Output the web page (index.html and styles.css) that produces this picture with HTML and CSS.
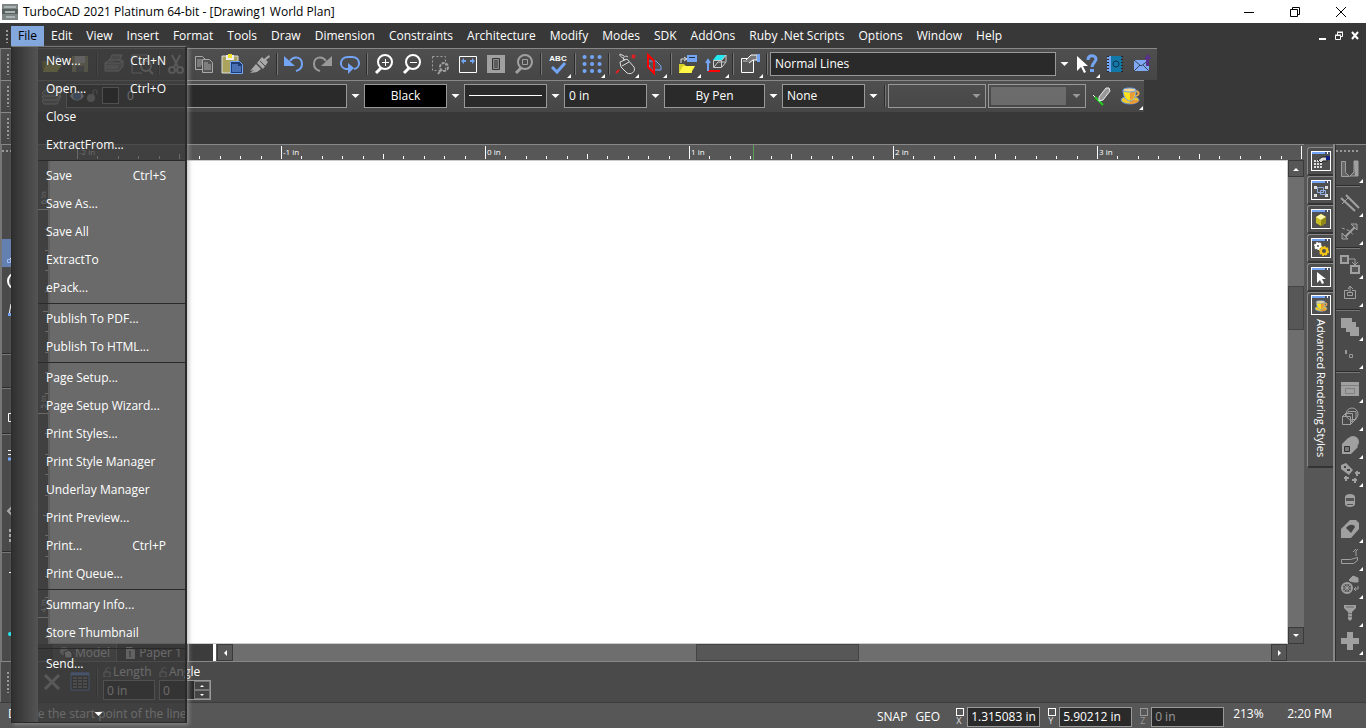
FILE: index.html
```html
<!DOCTYPE html>
<html lang="en">
<head>
    <meta charset="UTF-8">
    <meta name="viewport" content="width=device-width, initial-scale=1.0">
    <title>TurboCAD 2021 Platinum 64-bit - [Drawing1 World Plan]</title>
    <link rel="stylesheet" href="styles.css">
</head>
<body>
    <svg class="defs" width="0" height="0" aria-hidden="true">
        <symbol id="caret" viewBox="0 0 8 4"><path d="M0 0h8L4 4z" fill="currentColor"/></symbol>
        <symbol id="inch" viewBox="0 0 204 14">
            <path d="M.5 1v13M20.5 11v3M41.5 11v3M61.5 11v3M82.5 11v3M102.5 9v5M122.5 11v3M143.5 11v3M163.5 11v3M184.5 11v3" stroke="#fff"/>
        </symbol>
        <symbol id="inch-v" viewBox="0 0 10 204">
            <path d="M0 .5h10M7 20.5h3M7 41.5h3M7 61.5h3M7 82.5h3M5 102.5h5M7 122.5h3M7 143.5h3M7 163.5h3M7 184.5h3" stroke="#fff"/>
        </symbol>
        <symbol id="window" viewBox="0 0 20 20">
            <path d="M0 0h20v20H0z" fill="#fff"/><path d="M1 3h18v16H1z" fill="#505050"/>
            <path d="M1 1h13v2H1z" fill="#74a4f4"/><path d="M14 1h2v2h-2zM17 1h2v2h-2z" fill="#46536e"/>
        </symbol>
        <symbol id="cup" viewBox="0 0 24 24">
            <ellipse cx="12" cy="16" rx="9" ry="4" fill="#f2cb2c" stroke="#5c8fe0"/>
            <path d="M12 20c5 0 9-2 9-4h-9z" fill="#e89b34"/>
            <path d="M17 7c5 0 5 5-1 5" fill="none" stroke="#e8a94a" stroke-width="2"/>
            <path d="M5 6h13c0 6-2 11-6 11S5 12 5 6z" fill="#ffe21c" stroke="#6d9be8"/>
            <path d="M12 6h5c0 6-2 10-5 10z" fill="#e89b34"/>
            <ellipse cx="11.500" cy="6" rx="6.500" ry="2" fill="#f5d98c" stroke="#6d9be8"/>
        </symbol>
    </svg>

    <header class="titlebar">
        <svg class="app-icon" viewBox="0 0 16 16"><path d="M0 0h16v16H0z" fill="#7d8585"/><path d="M0 5h16v5H0z" fill="#596060"/><path d="M2 3h12M3 8h10M4 13h9" stroke="#aab2b2" stroke-width="2"/></svg>
        <h1>TurboCAD 2021 Platinum 64-bit - [Drawing1 World Plan]</h1>
        <div class="window-controls">
            <button aria-label="Minimize"><svg viewBox="0 0 10 10"><path d="M0 5.500h10" stroke="#000"/></svg></button>
            <button aria-label="Restore"><svg viewBox="0 0 10 10"><path d="M.5 2.500h7v7h-7zM2.500 2V.5h7v7H8" fill="none" stroke="#000"/></svg></button>
            <button aria-label="Close"><svg viewBox="0 0 10 10"><path d="M0 0l10 10M10 0L0 10" stroke="#000"/></svg></button>
        </div>
    </header>

    <nav class="menubar">
        <span class="grip"></span>
        <button class="open">File</button>
        <button>Edit</button>
        <button>View</button>
        <button>Insert</button>
        <button>Format</button>
        <button>Tools</button>
        <button>Draw</button>
        <button>Dimension</button>
        <button>Constraints</button>
        <button>Architecture</button>
        <button>Modify</button>
        <button>Modes</button>
        <button>SDK</button>
        <button>AddOns</button>
        <button>Ruby .Net Scripts</button>
        <button>Options</button>
        <button>Window</button>
        <button>Help</button>
        <div class="doc-controls">
            <a href="#" aria-label="Minimize drawing"><svg viewBox="0 0 10 10"><path d="M1 8h7" stroke="#fff" stroke-width="2"/></svg></a>
            <a href="#" aria-label="Restore drawing"><svg viewBox="0 0 10 10"><path d="M1.500 4.500h5v4h-5zM3.500 4V1.500h5v4H7M1 4h6M3 1h6" fill="none" stroke="#fff"/></svg></a>
            <a href="#" aria-label="Close drawing"><svg viewBox="0 0 10 10"><path d="M2 1l6 7M8 1L2 8" stroke="#fff" stroke-width="2"/></svg></a>
        </div>
    </nav>

    <div class="toolbar">
        <span class="grip"></span>
        <button class="tool" aria-label="Open"><svg viewBox="0 0 24 24"><path d="M2 9h7l2 2h7v9H3z" fill="#928e2c"/><path d="M6 13h16l-5 7H3z" fill="#c8c458"/><path d="M12 5h4l2-2 3 4-4 2V7h-5z" fill="#74a4f4"/></svg></button>
        <button class="tool" aria-label="Save"><svg viewBox="0 0 24 24"><path d="M4 4h16v16H4z" fill="#a8a67c"/><path d="M7 4h10v7H7z" fill="#ddd"/><path d="M8 14h8v6H8z" fill="#666"/></svg></button>
        <span class="sep"></span>
        <button class="tool" aria-label="Print"><svg viewBox="0 0 24 24" fill="none" stroke="#bbb"><path d="M7 9l3-6h10l-3 6M3 11l4-3h13l-2 3zM3 11v8h14l4-5V8" fill="#777"/><path d="M4 14h12M4 16h12"/></svg></button>
        <button class="tool" aria-label="Print preview"><svg viewBox="0 0 24 24" fill="none" stroke="#bbb"><path d="M12 21H2V3h16v5M5 3v4M18 3v4"/><circle cx="16" cy="14" r="5" stroke-width="2"/><path d="M19 18l4 4" stroke-width="2"/></svg></button>
        <span class="sep"></span>
        <button class="tool" aria-label="Cut"><svg viewBox="0 0 24 24" fill="none" stroke="#bbb" stroke-width="2"><path d="M8 3l6 12M16 3l-6 12"/><circle cx="8" cy="18" r="3"/><circle cx="16" cy="18" r="3"/></svg></button>
        <button class="tool" aria-label="Copy"><svg viewBox="0 0 24 24" fill="none" stroke="#a9a9a9"><path d="M3.500 4.500h7l3 3v10h-10z"/><path d="M5 8h5M5 10h5M5 12h5M5 14h4"/><path d="M10.500 7.500h7l3 3v10h-10z" fill="#555"/><path d="M12 11h4M12 13h7M12 15h7M12 17h7"/></svg></button>
        <button class="tool" aria-label="Paste"><svg viewBox="0 0 24 24"><path d="M2 4h16v17H2z" fill="#aaa35e" stroke="#ddd"/><path d="M6 3h8v5H6z" fill="#eee"/><path d="M8 2h4v4H8z" fill="#f3e32a"/><path d="M10.500 9.500h9l3 3v9h-12z" fill="#1f3e73" stroke="#74a4f4"/><path d="M12 13h6M12 15h9M12 17h9M12 19h9" stroke="#74a4f4"/></svg></button>
        <button class="tool" aria-label="Format painter"><svg viewBox="0 0 24 24"><path d="M21 3l-5 4-2-2-5 6 6 6 5-7-2-2 4-3zM8 12l5 5-4 3-7 1 4-3-4 1z" fill="#a9a9a9"/><path d="M12 9l5 5" stroke="#4a4a4a"/></svg></button>
        <span class="sep"></span>
        <button class="tool" aria-label="Undo"><svg viewBox="0 0 24 24"><path d="M2 4v10h11z" fill="#74a4f4"/><path d="M8 9c4-6 12-4 12 3 0 4-2 6-6 7" fill="none" stroke="#74a4f4" stroke-width="2"/></svg></button>
        <button class="tool" aria-label="Redo"><svg viewBox="0 0 24 24"><path d="M22 4v10H11z" fill="#999"/><path d="M16 9c-4-6-12-4-12 3 0 4 2 6 6 7" fill="none" stroke="#999" stroke-width="2"/></svg></button>
        <button class="tool" aria-label="Repeat"><svg viewBox="0 0 24 24"><path d="M10 17H8C1 16 1 5 10 5h4c9 0 9 11 2 12" fill="none" stroke="#74a4f4" stroke-width="2"/><path d="M10 11v11l6-6z" fill="#74a4f4"/></svg></button>
        <span class="sep"></span>
        <button class="tool" aria-label="Zoom in"><svg viewBox="0 0 24 24" fill="none" stroke="#fff"><circle cx="13" cy="10" r="7" stroke-width="2"/><path d="M9 16l-5 5" stroke-width="3"/><path d="M10 10.500h7M13.500 7v7"/></svg></button>
        <button class="tool" aria-label="Zoom out"><svg viewBox="0 0 24 24" fill="none" stroke="#fff"><circle cx="13" cy="10" r="7" stroke-width="2"/><path d="M9 16l-5 5" stroke-width="3"/><path d="M10 10.500h7"/></svg></button>
        <button class="tool" aria-label="Zoom window"><svg viewBox="0 0 24 24" fill="none" stroke="#a0a0a0"><path d="M4.500 4.500h13v14h-13z" stroke-dasharray="2 2"/><circle cx="16" cy="15" r="4" stroke-width="2" stroke-dasharray="3 1"/><path d="M13 18l-3 4" stroke-width="2"/></svg></button>
        <button class="tool" aria-label="Zoom extents"><svg viewBox="0 0 24 24"><path d="M3.500 4.500h17v16h-17z" fill="none" stroke="#fff"/><path d="M5 9l3-3v2h2v2H8v2zM19 9l-3-3v2h-2v2h2v2z" fill="#74a4f4"/></svg></button>
        <button class="tool" aria-label="Zoom page"><svg viewBox="0 0 24 24"><path d="M3 3h18v18H3z" fill="#a0a0a0"/><path d="M8.500 6.500h7v11h-7z" fill="#888" stroke="#333"/><path d="M10 9h4M10 11h4M10 13h4M10 15h4" stroke="#333"/></svg></button>
        <button class="tool" aria-label="Zoom selection"><svg viewBox="0 0 24 24" fill="none" stroke="#a0a0a0"><circle cx="13" cy="10" r="7" stroke-width="2"/><path d="M9 16l-5 5" stroke-width="3"/><path d="M10.500 7.500h5v5h-5z"/></svg></button>
        <span class="sep"></span>
        <button class="tool more" aria-label="Spelling"><svg viewBox="0 0 24 24"><text x="12" y="9" text-anchor="middle" font-family="Liberation Sans, sans-serif" font-size="8" font-weight="bold" fill="#fff">ABC</text><path d="M6 15l5 5 8-9" fill="none" stroke="#74a4f4" stroke-width="3"/></svg></button>
        <span class="sep"></span>
        <button class="tool more" aria-label="Grid"><svg viewBox="0 0 24 24"><path d="M4.500 5h.1M12 5h.1M19.500 5h.1M4.500 12h.1M12 12h.1M19.500 12h.1M4.500 19h.1M12 19h.1M19.500 19h.1" stroke="#74a4f4" stroke-width="4" stroke-linecap="round"/></svg></button>
        <span class="sep"></span>
        <button class="tool more" aria-label="Snap"><svg viewBox="0 0 24 24"><path d="M6 10l7-3 7 8c2 5-3 8-7 6l-6-6zM8 14l7-4M11 8C8 5 5 4 6 2l4 2M10 8c-2-3 2-5 4-3" fill="none" stroke="#ddd"/><path d="M18 3l3 3M21 3l-3 3M2 21l3-3" stroke="#e02020" stroke-width="2"/></svg></button>
        <button class="tool more" aria-label="Workplane"><svg viewBox="0 0 24 24"><path d="M5 9h9l5 5v4H9z" fill="#555" stroke="#74a4f4"/><path d="M6 3l6 6v12l-6-6z" fill="none" stroke="#f00" stroke-width="2"/></svg></button>
        <span class="sep"></span>
        <button class="tool more" aria-label="Open view"><svg viewBox="0 0 24 24"><path d="M11 3h10v7H11z" fill="#74a4f4"/><path d="M13 5h6v1h-6z" fill="#234"/><path d="M3 12h5l2 2h6v7H3z" fill="#d4cf28"/><path d="M7 14h12l-4 7H3z" fill="#fff645"/><path d="M5 11V7h5M8 5l3 2-3 2" fill="none" stroke="#ddd"/></svg></button>
        <button class="tool more" aria-label="View cube"><svg viewBox="0 0 24 24"><path d="M9 8l4-5h9l-4 5z" fill="#23eaf0"/><path d="M9.500 8.500h8v7h-8zM18 8l4-5v7l-4 5M10 15l4-5h7" fill="none" stroke="#ccc"/><path d="M4 19h12" fill="none" stroke="#f00" stroke-width="2"/><path d="M4 9v10M2 11l2-3 2 3" fill="none" stroke="#74a4f4" stroke-width="2"/></svg></button>
        <span class="sep"></span>
        <button class="tool more" aria-label="Properties"><svg viewBox="0 0 24 24"><path d="M3.500 6.500h12v14h-12z" fill="#555" stroke="#fff"/><path d="M5 9h8" stroke="#ccc"/><path d="M8 8l5-5h6v5h-4l-4 3" fill="#777" stroke="#fff"/><path d="M19 2h3v8h-3z" fill="#74a4f4"/></svg></button>
        <span class="sep"></span>
        <label class="combo grow"><select aria-label="Style"><option>Normal Lines</option></select><svg class="caret"><use href="#caret"/></svg></label>
        <button class="tool more" aria-label="Context help"><svg viewBox="0 0 24 24"><path d="M2 4v15l4-4 3 6 2-1-3-6h5z" fill="#fff"/><path d="M13 8c0-6 8-5 8-1 0 3-4 4-4 8" fill="none" stroke="#74a4f4" stroke-width="3"/><path d="M15 17h4v3h-4z" fill="#74a4f4"/></svg></button>
        <button class="tool" aria-label="Address book"><svg viewBox="0 0 24 24"><path d="M4 4h4v16H4z" fill="#74a4f4"/><path d="M8 4h11v16H8z" fill="#1278a8"/><path d="M5 4v16M19 4v16" stroke="#222" stroke-width="2" stroke-dasharray="1 2"/><circle cx="13" cy="12" r="3" fill="none" stroke="#0b3350"/></svg></button>
        <button class="tool" aria-label="Mail"><svg viewBox="0 0 24 24"><path d="M3 8h15v11H3z" fill="#80aaf5"/><path d="M3 8l7 6 8-6M3 19l6-6M18 19l-6-6" fill="none" stroke="#345"/><path d="M15 14V7h-2l4-5 3 5h-2v7z" fill="#59308c"/></svg></button>
    </div>

    <div class="toolbar">
        <span class="grip"></span>
        <button class="tool" aria-label="Layers"><svg viewBox="0 0 24 24" fill="#666" stroke="#bbb"><path d="M2 17l5-5h14l-4 8H4z"/><path d="M2 13l5-4h14l-4 7H4z"/><path d="M2 9l5-4h14l-4 7H4z"/></svg></button>
        <div class="layer-box">
            <svg class="layer-icon" viewBox="0 0 16 16"><path d="M1 8c4-6 10-6 14 0-4 6-10 6-14 0z" fill="#ddd"/><circle cx="8" cy="8" r="4" fill="#4d79bd"/></svg>
            <svg class="layer-icon" viewBox="0 0 16 16"><circle cx="6" cy="10" r="4" fill="#999"/><path d="M8 8V4c0-3 4-3 4 0v2" fill="none" stroke="#999"/></svg>
            <span class="swatch"></span>
            <select aria-label="Layer"><option>0</option></select>
        </div>
        <svg class="caret"><use href="#caret"/></svg>
        <label class="combo"><select class="black" aria-label="Color"><option>Black</option></select><svg class="caret"><use href="#caret"/></svg></label>
        <div class="combo"><button class="line-box" aria-label="Line style"><span></span></button><svg class="caret"><use href="#caret"/></svg></div>
        <label class="combo"><select aria-label="Line width"><option>0 in</option></select><svg class="caret"><use href="#caret"/></svg></label>
        <label class="combo wide"><select class="center" aria-label="Pen"><option>By Pen</option></select><svg class="caret"><use href="#caret"/></svg></label>
        <label class="combo"><select aria-label="Brush"><option>None</option></select><svg class="caret"><use href="#caret"/></svg></label>
        <span class="sep"></span>
        <label class="combo off"><select aria-label="Brush pattern" disabled><option></option></select><svg class="caret"><use href="#caret"/></svg></label>
        <label class="combo off"><select class="filled" aria-label="Brush color" disabled><option></option></select><svg class="caret"><use href="#caret"/></svg></label>
        <button class="tool" aria-label="Pick style"><svg viewBox="0 0 24 24"><path d="M3 11l5 5" stroke="#fff"/><path d="M5 13l8 8" stroke="#20d020" stroke-width="2"/><path d="M9 13l7-9h3l1 3-7 9-4 1z" fill="#999" stroke="#eee"/></svg></button>
        <button class="tool more" aria-label="Render material"><svg><use href="#cup"/></svg></button>
    </div>

    <div class="toolbar empty"><span class="grip"></span></div>

    <main class="workspace">
        <aside class="rail rail-left">
            <span class="grip-h"></span>
            <button class="tool" aria-label="Select"></button>
            <button class="tool" aria-label="Point"></button>
            <button class="tool" aria-label="Construction"></button>
            <button class="tool active" aria-label="Line"><svg viewBox="0 0 24 24"><path d="M6 18L20 4" stroke="#fff"/><path d="M3.500 18.500h3v3h-3z" fill="none" stroke="#9cc0ff"/></svg></button>
            <button class="tool" aria-label="Circle"><svg viewBox="0 0 24 24"><circle cx="12" cy="12" r="8" fill="none" stroke="#fff" stroke-width="2"/></svg></button>
            <button class="tool" aria-label="Arc"><svg viewBox="0 0 24 24"><path d="M5 18L7 7l10 9" fill="none" stroke="#fff"/><path d="M4 16h3v3H4z" fill="#74a4f4"/></svg></button>
            <button class="tool" aria-label="Curve"></button>
            <span class="sep-h"></span>
            <button class="tool" aria-label="Dimension"></button>
            <span class="sep-h double"></span>
            <button class="tool" aria-label="Box"><svg viewBox="0 0 24 24"><path d="M4.500 8.500h14v8h-14z" fill="none" stroke="#fff"/></svg></button>
            <span class="sep-h"></span>
            <button class="tool" aria-label="Text"><svg viewBox="0 0 24 24"><path d="M4 11.500h14M4 15.500h14" stroke="#fff"/><path d="M4 20h14" stroke="#74a4f4" stroke-width="3"/></svg></button>
            <button class="tool" aria-label="Hatch"></button>
            <button class="tool" aria-label="Wall"><svg viewBox="0 0 24 24"><path d="M4 16l5-5 5 5-5 5z" fill="none" stroke="#aaa" stroke-width="2"/></svg></button>
            <button class="tool" aria-label="Array"><svg viewBox="0 0 24 24"><path d="M6 6v14" stroke="#aaa" stroke-width="2" stroke-dasharray="3 2"/></svg></button>
            <span class="sep-h"></span>
            <button class="tool" aria-label="Slab"><svg viewBox="0 0 24 24"><path d="M5 15.500h13" stroke="#fff"/></svg></button>
            <button class="tool" aria-label="Light"></button>
            <button class="tool" aria-label="Camera"><svg viewBox="0 0 24 24"><circle cx="6" cy="21" r="2" fill="#23eaf0"/></svg></button>
        </aside>

        <section class="drawing">
            <div class="ruler-top">
                <div class="inch"><svg><use href="#inch"/></svg>-2 in</div>
                <div class="inch"><svg><use href="#inch"/></svg>-1 in</div>
                <div class="inch"><svg><use href="#inch"/></svg>0 in</div>
                <div class="inch"><svg><use href="#inch"/></svg>1 in<span class="cursor-mark"></span></div>
                <div class="inch"><svg><use href="#inch"/></svg>2 in</div>
                <div class="inch"><svg><use href="#inch"/></svg>3 in</div>
                <div class="inch"><svg><use href="#inch"/></svg></div>
            </div>
            <div class="canvas-row">
                <div class="ruler-left">
                    <div class="inch-v"><svg><use href="#inch-v"/></svg><span>6 in</span></div>
                    <div class="inch-v"><svg><use href="#inch-v"/></svg><span>5 in</span></div>
                    <div class="inch-v"><svg><use href="#inch-v"/></svg><span>4 in</span></div>
                </div>
                <div class="canvas"></div>
                <div class="scroll-v">
                    <button aria-label="Scroll up"><svg viewBox="0 0 8 8"><path d="M1 6h6L4 3z" fill="#fff"/></svg></button>
                    <span class="thumb"></span>
                    <button aria-label="Scroll down"><svg viewBox="0 0 8 8"><path d="M1 2h6L4 5z" fill="#fff"/></svg></button>
                </div>
            </div>
            <div class="page-row">
                <div class="page-tabs">
                    <button class="current"><svg viewBox="0 0 14 12"><circle cx="5" cy="4" r="4" fill="#bbb"/><path d="M5 5l5-2 3 3v5H6z" fill="#ddd" stroke="#333"/></svg>Model</button>
                    <button><svg viewBox="0 0 14 12"><path d="M3 0h6l3 3v9H3z" fill="#ddd"/><path d="M7 4v6M6 5h1" stroke="#333"/></svg>Paper 1</button>
                </div>
                <button class="scroll-button" aria-label="Scroll left"><svg viewBox="0 0 8 8"><path d="M6 1v6L3 4z" fill="#fff"/></svg></button>
                <div class="scroll-h"><span class="thumb"></span></div>
                <button class="scroll-button" aria-label="Scroll right"><svg viewBox="0 0 8 8"><path d="M3 1v6l3-3z" fill="#fff"/></svg></button>
                <span class="corner"></span>
            </div>
        </section>

        <aside class="palettes">
            <button aria-label="Selection info"><svg viewBox="0 0 20 20"><use href="#window"/><path d="M3 9h8v8H3z" fill="#ddd"/><path d="M3 11.500h8M3 14.500h8M5.500 9v8M8.500 9v8" stroke="#555"/><path d="M7 9l4-3h5v4h-4l-2 2z" fill="#ddd" stroke="#222"/><path d="M15 5h4v4h-4z" fill="#102080"/></svg></button>
            <button aria-label="Blocks"><svg viewBox="0 0 20 20"><use href="#window"/><path d="M3 6h3v3H3zM14 6h3v3h-3zM3 14h3v3H3zM14 14h3v3h-3z" fill="#ddd"/><path d="M6.500 7.500h6v5h-6zM9.500 10.500h5v4h-5z" fill="none" stroke="#8faee0"/></svg></button>
            <button aria-label="Library"><svg viewBox="0 0 20 20"><use href="#window"/><path d="M10 5l5 3v6l-5 3-5-3V8z" fill="#c8be22"/><path d="M10 5l5 3-5 3-5-3z" fill="#fff8a8"/><path d="M10 11l5-3v6l-5 3z" fill="#8f8716"/></svg></button>
            <button aria-label="Design director"><svg viewBox="0 0 20 20" fill="none"><use href="#window"/><circle cx="7" cy="8" r="2" stroke="#fff" stroke-width="2"/><circle cx="7" cy="8" r="3" stroke="#fff" stroke-width="2" stroke-dasharray="2 1"/><circle cx="13" cy="13" r="3" stroke="#f5c518" stroke-width="2"/><circle cx="13" cy="13" r="4" stroke="#f5c518" stroke-width="2" stroke-dasharray="2 1"/></svg></button>
            <button aria-label="Selector"><svg viewBox="0 0 20 20"><use href="#window"/><path d="M6 5v11l3-3 2 4 2-1-2-4h4z" fill="#fff"/></svg></button>
            <button class="current"><svg viewBox="0 0 20 20"><use href="#window"/><use href="#cup" x="2" y="3" width="16" height="16"/></svg><span>Advanced Rendering Styles</span></button>
        </aside>

        <aside class="rail rail-right">
            <span class="grip-h"></span>
            <button class="tool more" aria-label="Magnet"><svg viewBox="0 0 24 24"><path d="M3.500 4.500h4v11l4 4h-8zM16 4h4v15h-8l4-4z" fill="#666" stroke="#a0a0a0"/><path d="M16 4h4v15h-3z" fill="#a0a0a0"/></svg></button>
            <span class="sep-h"></span>
            <button class="tool more" aria-label="Trim"><svg viewBox="0 0 24 24"><path d="M3 7l14 13M8 4l13 13" stroke="#a0a0a0" stroke-width="2"/><path d="M4 13l7-7" stroke="#a0a0a0"/></svg></button>
            <button class="tool more" aria-label="Stretch"><svg viewBox="0 0 24 24"><path d="M7 18L17 8" stroke="#a0a0a0" stroke-width="2"/><path d="M4 20v-6l6 6zM19 5v6l-6-6z" fill="#5a5a5a" stroke="#a0a0a0"/><path d="M4 9l8 3 4 5" fill="none" stroke="#a0a0a0" stroke-dasharray="3 2"/></svg></button>
            <span class="sep-h"></span>
            <button class="tool more" aria-label="Copy linear"><svg viewBox="0 0 24 24"><path d="M3 3h7v7H3zM13 13h8v7h-8z" fill="#555" stroke="#a0a0a0" stroke-width="2"/><path d="M11 6h6v5M14 9l3 3 3-3" fill="none" stroke="#a0a0a0"/></svg></button>
            <button class="tool more" aria-label="Lift"><svg viewBox="0 0 24 24"><path d="M6.500 9.500h4M14 9.500h3.500v8h-11v-8" fill="none" stroke="#a0a0a0"/><path d="M9.500 14.500v-3h5v3zM12 12V6M10 8l2-3 3 3" fill="none" stroke="#a0a0a0"/></svg></button>
            <span class="sep-h"></span>
            <button class="tool more" aria-label="Union"><svg viewBox="0 0 24 24"><path d="M3 3h11v4h4v5h3v9h-9v-4H8v-4H3z" fill="#a0a0a0"/></svg></button>
            <button class="tool more" aria-label="Nodes"><svg viewBox="0 0 24 24"><path d="M7 7h2v4H7z" fill="#999"/><path d="M11.500 11.500h3v3h-3z" fill="none" stroke="#999"/></svg></button>
            <span class="sep-h"></span>
            <button class="tool more" aria-label="Sheet"><svg viewBox="0 0 24 24"><path d="M3 5h18v14H3z" fill="#a0a0a0"/><path d="M3 8.500h18M7.500 11.500h9v5h-9z" stroke="#808080" fill="none"/></svg></button>
            <button class="tool more" aria-label="Contour"><svg viewBox="0 0 24 24" fill="none" stroke="#a0a0a0"><circle cx="14" cy="9" r="6" /><path d="M4.500 11.500h8v8h-8zM7.500 11V8.500h7v8H13M10 8V6.500h8v8h-3M4 12l4-4M12 20l5-5" /></svg></button>
            <button class="tool more" aria-label="Cylinder"><svg viewBox="0 0 24 24"><circle cx="15" cy="9" r="6" fill="#a0a0a0"/><path d="M10 5l-6 6v10h9l7-7z" fill="#a0a0a0"/><path d="M6.500 13.500h5v5h-5z" fill="#777" stroke="#333"/></svg></button>
            <button class="tool more" aria-label="Materials"><svg viewBox="0 0 24 24"><path d="M3 4l5-2 7 7-4 5-8-6z" fill="#a0a0a0"/><path d="M6 5h2v2H6zM9 8h3v2H9z" fill="#444"/><path d="M8 15v5M6 17h5M19 10v5M17 12h5M17 17v5M14 19h5" stroke="#a0a0a0" stroke-width="2"/></svg></button>
            <button class="tool" aria-label="Face"><svg viewBox="0 0 24 24"><path d="M7 8c0-4 10-4 10 0v7c0 4-10 4-10 0z" fill="#a0a0a0"/><path d="M8 9h8v3H8zM9 15h6v1H9z" fill="#555"/></svg></button>
            <button class="tool more" aria-label="Chamfer"><svg viewBox="0 0 24 24"><path d="M3 12l9-9h6l3 3v6l-8 9H3z" fill="#a0a0a0"/><path d="M8 11c3-4 8-4 9-1l-4 6z" fill="#444"/></svg></button>
            <button class="tool more" aria-label="Bend"><svg viewBox="0 0 24 24"><path d="M3.500 14.500h9l7-2v3l-4 3h-12zM18 11V6l2-2M15 7l3-3" fill="none" stroke="#a0a0a0"/></svg></button>
            <button class="tool more" aria-label="Facets"><svg viewBox="0 0 24 24" fill="none" stroke="#a0a0a0"><circle cx="9" cy="15" r="5" stroke-width="2"/><path d="M4 15h10M9 10v10M6 12l6 6M12 12l-6 6"/><path d="M11 7l4-4 5 2v4h-4l-4-1z" fill="#a0a0a0"/><path d="M20 13v3h-4M18 14l-2 2 2 2"/></svg></button>
            <button class="tool more" aria-label="Fasteners"><svg viewBox="0 0 24 24"><path d="M6 4h12v3l-4 4v7l-2 2-2-2v-7L6 7z" fill="#a0a0a0"/><path d="M8 6h8M10 12l4 1M10 15l4 1" stroke="#666"/></svg></button>
            <button class="tool more" aria-label="Add"><svg viewBox="0 0 24 24"><path d="M9 3h6v6h6v6h-6v6H9v-6H3V9h6z" fill="#a0a0a0"/></svg></button>
        </aside>
    </main>

    <div class="inspector">
        <span class="grip"></span>
        <button class="tool" aria-label="Cancel"><svg viewBox="0 0 24 24"><path d="M5 5l14 14M19 5L5 19" stroke="#bbb" stroke-width="3"/></svg></button>
        <button class="tool" aria-label="Field table"><svg viewBox="0 0 24 24"><path d="M3 3h18v17H3z" fill="#333" stroke="#74a4f4"/><path d="M3 4h18" stroke="#74a4f4" stroke-width="3"/><path d="M5 8h4M10 8h4M15 8h4M5 11h4M10 11h4M15 11h4M5 14h4M10 14h4M15 14h4M5 17h4M10 17h4M15 17h4" stroke="#ddd"/></svg></button>
        <span class="sep"></span>
        <div class="field">
            <label for="length"><svg viewBox="0 0 9 10"><path d="M1 5h6v5H1zM3 5V2c0-2 4-2 4 0" fill="none" stroke="#bbb"/></svg>Length</label>
            <input id="length" type="text" value="0 in">
        </div>
        <div class="field">
            <label for="angle"><svg viewBox="0 0 9 10"><path d="M1 5h6v5H1zM3 5V2c0-2 4-2 4 0" fill="none" stroke="#bbb"/></svg>Angle</label>
            <div class="spin">
                <input id="angle" type="text" value="0">
                <div class="spin-buttons">
                    <button aria-label="Increase"><svg viewBox="0 0 4 4"><path d="M0 3h4L2 1z" fill="#fff"/></svg></button>
                    <button aria-label="Decrease"><svg viewBox="0 0 4 4"><path d="M0 1h4L2 3z" fill="#fff"/></svg></button>
                </div>
            </div>
        </div>
    </div>

    <footer class="statusbar">
        <p>Define the start point of the line</p>
        <button>SNAP</button>
        <button>GEO</button>
        <div class="coord"><label for="x"><i></i>X</label><input id="x" type="text" value="1.315083 in"></div>
        <div class="coord"><label for="y"><i></i>Y</label><input id="y" type="text" value="5.90212 in"></div>
        <div class="coord off"><label for="z"><i></i>Z</label><input id="z" type="text" value="0 in" disabled></div>
        <span class="zoom">213%</span>
        <time>2:20 PM</time>
    </footer>

    <div class="file-menu">
        <div class="items">
            <button>New... <kbd>Ctrl+N</kbd></button>
            <button>Open... <kbd>Ctrl+O</kbd></button>
            <button>Close</button>
            <button>ExtractFrom...</button>
            <hr>
            <button>Save <kbd>Ctrl+S</kbd></button>
            <button>Save As...</button>
            <button>Save All</button>
            <button>ExtractTo</button>
            <button>ePack...</button>
            <hr>
            <button>Publish To PDF...</button>
            <button>Publish To HTML...</button>
            <hr>
            <button>Page Setup...</button>
            <button>Page Setup Wizard...</button>
            <button>Print Styles...</button>
            <button>Print Style Manager</button>
            <button>Underlay Manager</button>
            <button>Print Preview...</button>
            <button>Print... <kbd>Ctrl+P</kbd></button>
            <button>Print Queue...</button>
            <hr>
            <button>Summary Info...</button>
            <button>Store Thumbnail</button>
            <hr>
            <button>Send...</button>
        </div>
        <button class="scroll-more" aria-label="More items"><svg class="caret"><use href="#caret"/></svg></button>
    </div>
</body>
</html>
```

FILE: styles.css
```css
* {
    box-sizing: border-box;
}

body {
    display: flex;
    flex-direction: column;
    height: 100vh;
    margin: 0;
    overflow: hidden;
    background: #383838;
    color: #fff;
    font-family: "Open Sans", "Noto Sans", sans-serif;
    font-size: 12px;
    line-height: 16px;
}

button, input, select {
    margin: 0;
    padding: 0;
    border: 0;
    border-radius: 0;
    background: none;
    color: inherit;
    font: inherit;
}

svg {
    display: block;
    flex: none;
}

.defs {
    position: absolute;
}

/* title bar */
.titlebar {
    display: flex;
    align-items: center;
    flex: none;
    height: 23px;
    padding-left: 2px;
    background: #fff;
    color: #000;
}

.titlebar h1 {
    margin: 0 0 0 5px;
    font-size: 12px;
    font-weight: normal;
}

.app-icon {
    width: 16px;
    height: 16px;
}

.window-controls {
    display: flex;
    margin-left: auto;
    padding-right: 2px;
}

.window-controls button {
    display: grid;
    place-items: center;
    width: 46px;
    height: 20px;
}

.window-controls svg, .doc-controls svg {
    width: 10px;
    height: 10px;
}

/* menu bar */
.menubar {
    display: flex;
    align-items: center;
    flex: none;
    height: 25px;
}

.menubar button {
    height: 20px;
    padding: 0 7px;
    white-space: nowrap;
}

.menubar button.open {
    background: #83a8de;
    color: #000;
}

.doc-controls {
    display: flex;
    gap: 6px;
    margin-left: auto;
    padding-right: 6px;
}

.grip {
    flex: none;
    width: 11px;
    height: 14px;
    background: radial-gradient(circle at 7px 2px, #999 1px, transparent 1px) 0 0 / 11px 4px repeat-y;
}

/* toolbars */
.toolbar {
    display: flex;
    align-items: center;
    align-self: flex-start;
    flex: none;
    height: 32px;
    padding-bottom: 2px;
    border-top: 1px solid #888;
    border-left: 1px solid #777;
    background: linear-gradient(#4f4f4f, #464646);
}

.toolbar .grip, .inspector .grip {
    width: 37px;
    height: 22px;
}

.toolbar.empty {
    width: 38px;
}

.tool {
    display: grid;
    place-items: center;
    position: relative;
    flex: none;
    width: 28px;
    height: 28px;
}

.tool svg {
    width: 24px;
    height: 24px;
}

/* small corner mark on buttons that open a flyout */
.more::after {
    content: "";
    position: absolute;
    right: 1px;
    bottom: 0;
    border: 2px solid transparent;
    border-right-color: #fff;
    border-bottom-color: #fff;
}

.sep {
    flex: none;
    width: 6px;
    height: 22px;
    background: linear-gradient(90deg, transparent 2px, #2c2c2c 2px, #2c2c2c 3px, #777 3px, #777 4px, transparent 4px);
}

.combo {
    display: flex;
    align-items: center;
}

.combo select, .line-box {
    appearance: none;
    width: 83px;
    height: 24px;
    padding: 0 4px;
    border: 1px solid #999;
    background: #2a2a2a;
}

.combo.grow select {
    width: 286px;
}

.combo.wide select {
    width: 101px;
}

.combo select.black {
    background: #000;
    text-align: center;
}

.combo select.center {
    text-align: center;
}

.caret {
    width: 17px;
    height: 4px;
    color: #fff;
}

.combo.off {
    width: 98px;
    margin-right: 2px;
    border: 1px solid #999;
    color: #999;
}

.combo.off select {
    width: 80px;
    height: 22px;
    border: 2px solid transparent;
    background: transparent;
}

.combo.off select.filled {
    background: #7a7a7a;
    background-clip: padding-box;
}

.combo.off .caret {
    color: #999;
}

.line-box span {
    display: block;
    height: 1px;
    background: #fff;
}

.layer-box {
    display: flex;
    align-items: center;
    width: 281px;
    height: 24px;
    padding-left: 2px;
    border: 1px solid #999;
    background: #2a2a2a;
}

.layer-box select {
    appearance: none;
    flex: 1;
    padding-left: 8px;
}

.layer-icon {
    width: 16px;
    height: 16px;
}

.swatch {
    width: 17px;
    height: 17px;
    margin-left: 1px;
    border: 1px solid #999;
    background: #000;
}

/* workspace */
.workspace {
    display: flex;
    flex: 1;
    min-height: 0;
}

.rail {
    display: flex;
    flex-direction: column;
    flex: none;
    overflow: hidden;
    border-top: 1px solid #888;
    background: #4a4a4a;
}

.rail-left {
    width: 38px;
    border-left: 2px solid #777;
}

.rail-right {
    width: 31px;
    border-left: 1px solid #2f2f2f;
}

.rail .active {
    background: #6480b0;
}

.grip-h {
    flex: none;
    width: 24px;
    height: 10px;
    background: radial-gradient(circle at 2px 6px, #999 1px, transparent 1px) 3px 0 / 4px 11px repeat-x;
}

.sep-h {
    flex: none;
    width: 24px;
    height: 6px;
    background: linear-gradient(transparent 2px, #2c2c2c 2px, #2c2c2c 3px, #777 3px, #777 4px, transparent 4px);
}

.sep-h.double {
    height: 18px;
}

.drawing {
    display: flex;
    flex-direction: column;
    flex: 1;
    min-width: 0;
    border-top: 1px solid #888;
    background: #575757;
}

.ruler-top {
    display: flex;
    flex: none;
    height: 15px;
    padding-left: 39px;
    overflow: hidden;
    font-size: 8px;
    line-height: 14px;
}

.inch {
    position: relative;
    flex: none;
    width: 204px;
    padding-left: 2px;
}

.inch svg {
    position: absolute;
    left: 0;
    top: 0;
    width: 204px;
    height: 14px;
}

.cursor-mark {
    position: absolute;
    left: 64px;
    top: 0;
    width: 1px;
    height: 15px;
    background: #58a058;
}

.canvas-row {
    display: flex;
    flex: 1;
    min-height: 0;
}

.ruler-left {
    flex: none;
    width: 10px;
    padding-top: 49px;
    overflow: hidden;
    font-size: 8px;
}

.inch-v {
    position: relative;
    height: 204px;
}

.inch-v svg {
    width: 10px;
    height: 204px;
}

.inch-v span {
    position: absolute;
    left: -3px;
    top: -18px;
    writing-mode: vertical-rl;
    transform: rotate(180deg);
}

.canvas {
    flex: 1;
    border: 1px solid #ccc;
    border-left-width: 2px;
    background: #fff;
}

.scroll-v {
    display: flex;
    flex-direction: column;
    width: 16px;
    background: #6e6e6e;
}

.scroll-v button, .scroll-button {
    display: grid;
    place-items: center;
    flex: none;
    width: 16px;
    height: 17px;
    border: 1px solid #3a3a3a;
    background: #575757;
}

.scroll-v svg, .scroll-button svg {
    width: 8px;
    height: 8px;
}

.thumb {
    border: 1px solid #444;
    background: #575757;
}

.scroll-v .thumb {
    height: 44px;
    margin: 109px 0 auto;
}

.page-row {
    display: flex;
    flex: none;
    height: 17px;
}

.page-tabs {
    display: flex;
    width: 178px;
    margin-right: 1px;
    padding-left: 15px;
    border-right: 3px solid #fff;
    background: #3c3c3c;
}

.page-tabs button {
    display: flex;
    align-items: center;
    gap: 2px;
    padding: 0 6px;
    border-right: 1px solid #888;
    white-space: nowrap;
}

.page-tabs .current {
    background: #575757;
}

.page-tabs svg {
    width: 14px;
    height: 12px;
}

.scroll-h {
    display: flex;
    flex: 1;
    background: #6e6e6e;
}

.scroll-h::before {
    content: "";
    flex: 46;
}

.scroll-h::after {
    content: "";
    flex: 41;
}

.scroll-h .thumb {
    flex: 16;
}

.corner {
    width: 17px;
}

/* docked palettes */
.palettes {
    display: flex;
    flex-direction: column;
    flex: none;
    width: 31px;
    padding: 3px 0 0 3px;
    border-right: 2px solid #888;
    background: #575757;
}

.palettes button {
    display: flex;
    justify-content: center;
    align-items: center;
    flex: none;
    height: 29px;
    border: 1px solid #888;
    border-right: 0;
    border-bottom: 2px solid #333;
    border-radius: 3px 0 0 3px;
    background: #4f4f4f;
}

.palettes .current {
    flex-direction: column;
    justify-content: flex-start;
    gap: 4px;
    height: 176px;
    padding-top: 2px;
}

.palettes svg {
    width: 20px;
    height: 20px;
}

.palettes span {
    font-size: 11px;
    writing-mode: vertical-rl;
    white-space: nowrap;
}

/* inspector bar */
.inspector {
    display: flex;
    align-items: center;
    flex: none;
    height: 41px;
    border-top: 1px solid #888;
    border-left: 1px solid #777;
    background: #4a4a4a;
}

.inspector .sep {
    height: 28px;
    margin-right: 3px;
}

.field {
    width: 52px;
    margin-right: 4px;
}

.field label {
    display: flex;
    align-items: center;
    gap: 1px;
    height: 16px;
    white-space: nowrap;
}

.field svg {
    width: 9px;
    height: 10px;
}

.field input {
    display: block;
    width: 100%;
    height: 20px;
    padding: 0 3px;
    border: 1px solid #999;
    background: #2a2a2a;
}

.spin {
    display: flex;
    height: 20px;
    border: 1px solid #999;
}

.spin input {
    flex: 1;
    min-width: 0;
    height: 18px;
    border: 0;
}

.spin-buttons {
    display: flex;
    flex-direction: column;
    width: 16px;
}

.spin-buttons button {
    display: grid;
    place-items: center;
    flex: 1;
    border: 1px solid #777;
    background: #444;
}

.spin-buttons svg {
    width: 4px;
    height: 4px;
}

/* status bar */
.statusbar {
    display: flex;
    align-items: center;
    flex: none;
    height: 26px;
    padding: 2px 34px 0 8px;
    border-top: 1px solid #3c3c3c;
    background: #575757;
}

.statusbar p {
    margin: 0 auto 6px 0;
}

.statusbar > button {
    margin-right: 8px;
}

.coord {
    display: flex;
    align-items: center;
    margin-left: 8px;
}

.coord label {
    width: 11px;
    color: #ddd;
    font-size: 9px;
    line-height: 9px;
}

.coord i {
    display: block;
    width: 8px;
    height: 8px;
    border: 1px solid #fff;
}

.coord input {
    width: 73px;
    height: 20px;
    padding: 0 0 0 3px;
    border: 1px solid #999;
    background: #2a2a2a;
}

.coord.off input, .coord.off label {
    color: #999;
}

.coord.off i {
    border-color: #999;
}

.zoom, time {
    margin-bottom: 6px;
    white-space: nowrap;
}

.zoom {
    width: 54px;
    margin-left: 9px;
}

/* open File menu, lies over the toolbars and the canvas */
.file-menu {
    position: absolute;
    left: 11px;
    top: 46px;
    width: 176px;
    padding-left: 26px;
    border: 1px solid #2a2a2a;
    border-right-width: 2px;
    border-top-color: #777;
    background: linear-gradient(90deg, #303030, #545454) left / 26px 100% no-repeat, rgba(56, 56, 56, 0.75);
    box-shadow: 2px 2px 4px rgba(160, 160, 160, 0.6);
}

.items {
    display: flex;
    flex-direction: column;
}

.items button {
    display: flex;
    align-items: center;
    justify-content: space-between;
    height: 28px;
    padding: 0 19px 0 8px;
    white-space: nowrap;
}

.items kbd {
    font: inherit;
}

.items hr {
    width: 100%;
    height: 3px;
    margin: 0;
    border: 0;
    background: linear-gradient(transparent 1px, #2a2a2a 1px, #2a2a2a 2px, transparent 2px);
}

.scroll-more {
    display: block;
    width: 100%;
    height: 44px;
    padding: 28px 0 0 52px;
}
```
